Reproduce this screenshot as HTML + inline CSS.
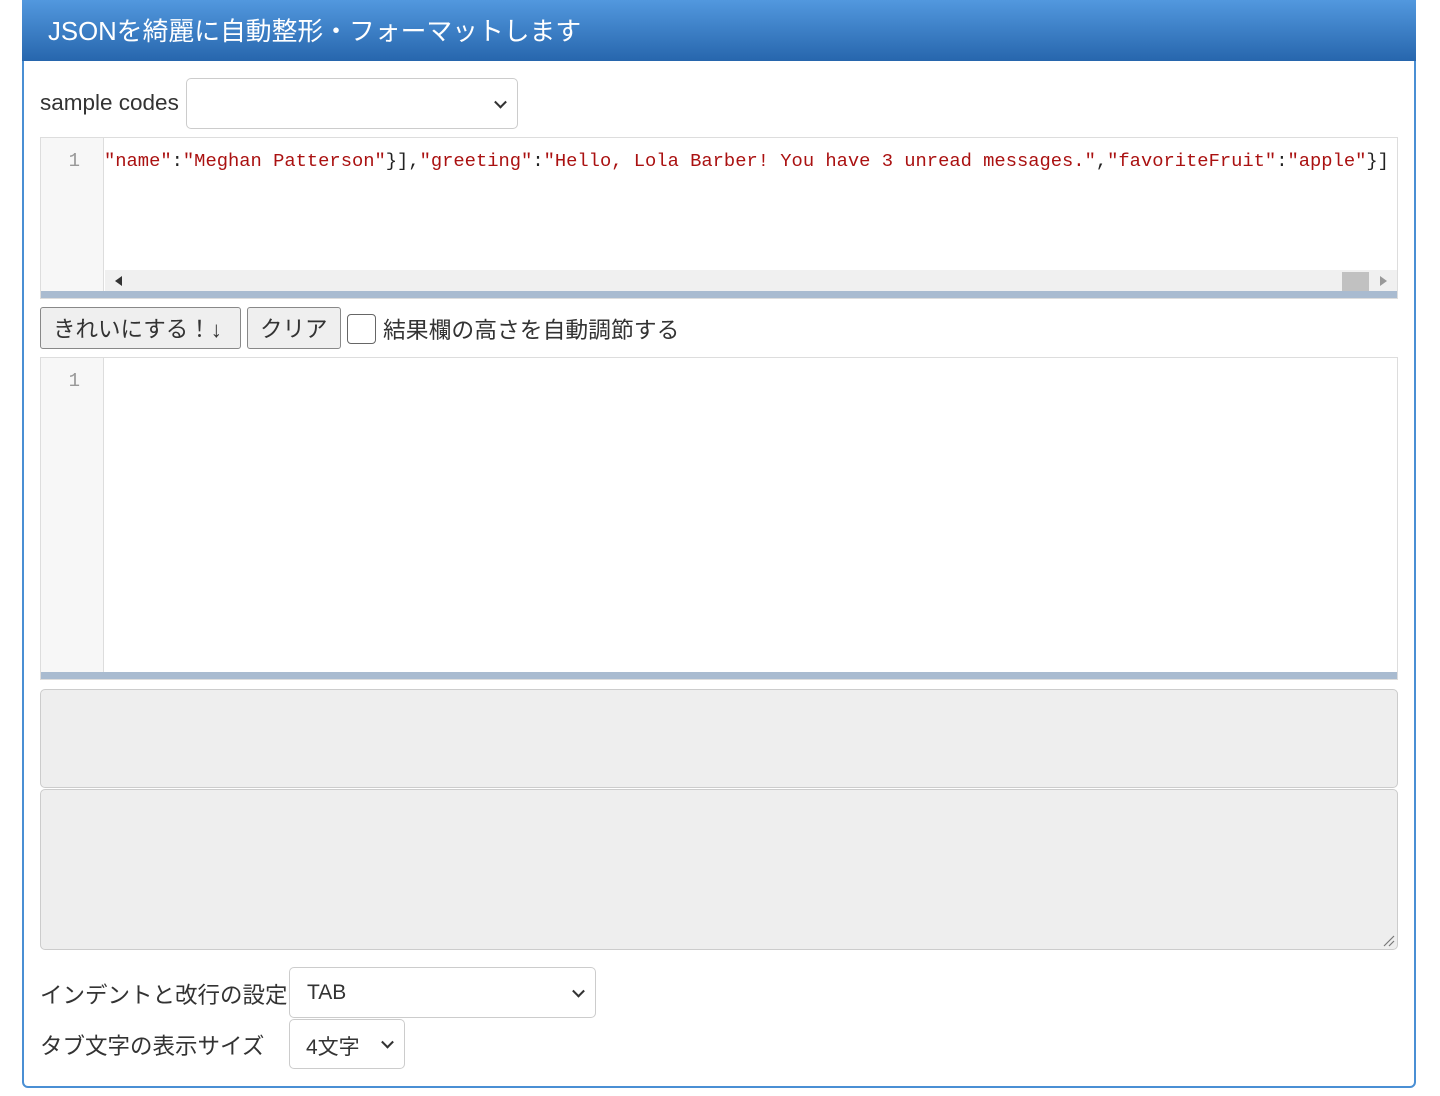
<!DOCTYPE html>
<html><head><meta charset="utf-8"><style>
*{box-sizing:border-box;margin:0;padding:0}
body{width:1440px;height:1096px;background:#fff;font-family:"Liberation Sans","Noto Sans CJK JP",sans-serif;position:relative;overflow:hidden;color:#333}
.a{position:absolute}
.panel{left:22px;top:-4px;width:1394px;height:1092px;border:2px solid #4a8fd4;border-radius:6px}
.head{left:22px;top:0;width:1394px;height:61px;background:linear-gradient(#5298de,#2766ad);color:#fff;font-size:25.8px;padding:11px 0 0 26px;border-radius:0}
.sel{background:#fff;border:1px solid #ccc;border-radius:5px}
.chev{position:absolute;right:12px;top:50%;width:9px;height:9px;border-right:2.5px solid #333;border-bottom:2.5px solid #333;transform:translateY(-70%) rotate(45deg)}
.ed{border:1px solid #ddd;background:#fff}
.gut{position:absolute;left:0;top:0;width:63px;bottom:0;background:#f7f7f7;border-right:1px solid #ddd;color:#999;font-family:"Liberation Mono",monospace;font-size:19px;text-align:right;padding:12px 23px 0 0}
.bar{position:absolute;left:0;right:0;bottom:0;height:7px;background:#a9bbd0}
.btn{background:#efefef;border:1px solid #888;border-radius:3px;font-size:22.5px;color:#333;padding:4px 0 0 12px}
.gray{background:#eee;border:1px solid #ccc;border-radius:5px}
.lbl{font-size:22.5px;color:#333}
</style></head><body>
<div class="a panel"></div>
<div class="a head">JSONを綺麗に自動整形・フォーマットします</div>
<div class="a lbl" style="left:40px;top:90px;font-size:22.5px">sample codes</div>
<div class="a sel" style="left:186px;top:78px;width:332px;height:51px"><span class="chev"></span></div>
<div class="a ed" style="left:40px;top:137px;width:1358px;height:162px;overflow:hidden">
 <div class="gut">1</div>
 <div class="a" style="left:63px;top:12px;white-space:pre;font-family:'Liberation Mono',monospace;font-size:18.8px;color:#a11"><span>"name"</span><span style="color:#222">:</span>"Meghan Patterson"<span style="color:#222">}],</span>"greeting"<span style="color:#222">:</span>"Hello, Lola Barber! You have 3 unread messages."<span style="color:#222">,</span>"favoriteFruit"<span style="color:#222">:</span>"apple"<span style="color:#222">}]</span></div>
 <div class="a" style="left:64px;right:0;top:132px;height:22px;background:#f0f0f0">
  <div class="a" style="left:10px;top:6px;border-right:7px solid #333;border-top:5px solid transparent;border-bottom:5px solid transparent"></div>
  <div class="a" style="right:28px;top:2px;width:27px;height:20px;background:#c1c1c1"></div>
  <div class="a" style="right:10px;top:6px;border-left:7px solid #999;border-top:5px solid transparent;border-bottom:5px solid transparent"></div>
 </div>
 <div class="bar"></div>
</div>
<div class="a btn" style="left:40px;top:307px;width:201px;height:42px">きれいにする！↓</div>
<div class="a btn" style="left:247px;top:307px;width:94px;height:42px">クリア</div>
<div class="a" style="left:347px;top:314px;width:29px;height:30px;border:1.5px solid #666;border-radius:4px;background:#fff"></div>
<div class="a" style="left:383px;top:312px;font-size:22.8px;color:#333">結果欄の高さを自動調節する</div>
<div class="a ed" style="left:40px;top:357px;width:1358px;height:323px">
 <div class="gut">1</div>
 <div class="bar"></div>
</div>
<div class="a gray" style="left:40px;top:689px;width:1358px;height:99px"></div>
<div class="a gray" style="left:40px;top:789px;width:1358px;height:161px">
 <svg class="a" style="right:2px;bottom:2px" width="14" height="14"><path d="M13 3L3 13M13 8L8 13" stroke="#777" stroke-width="1.2"/></svg>
</div>
<div class="a lbl" style="left:40px;top:978px;white-space:nowrap">インデントと改行の設定</div>
<div class="a sel" style="left:289px;top:967px;width:307px;height:51px"><span class="a" style="left:17px;top:13px;font-size:21px">TAB</span><span class="chev"></span></div>
<div class="a lbl" style="left:40px;top:1029px;white-space:nowrap">タブ文字の表示サイズ</div>
<div class="a sel" style="left:289px;top:1019px;width:116px;height:50px"><span class="a" style="left:16px;top:11px;font-size:21px">4文字</span><span class="chev"></span></div>
</body></html>
